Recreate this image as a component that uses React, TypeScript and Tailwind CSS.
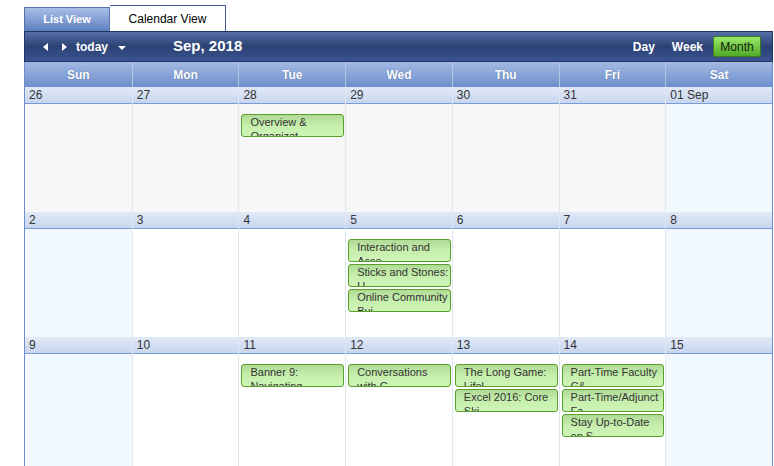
import React from "react";

type Cell = { label: string; kind: "other" | "weekend" | "day"; events?: string[] };

const weeks: Cell[][] = [
  [
    { label: "26", kind: "other" },
    { label: "27", kind: "other" },
    { label: "28", kind: "other", events: ["Overview & Organizat"] },
    { label: "29", kind: "other" },
    { label: "30", kind: "other" },
    { label: "31", kind: "other" },
    { label: "01 Sep", kind: "weekend" },
  ],
  [
    { label: "2", kind: "weekend" },
    { label: "3", kind: "day" },
    { label: "4", kind: "day" },
    {
      label: "5",
      kind: "day",
      events: ["Interaction and Acce", "Sticks and Stones: U", "Online Community Bui"],
    },
    { label: "6", kind: "day" },
    { label: "7", kind: "day" },
    { label: "8", kind: "weekend" },
  ],
  [
    { label: "9", kind: "weekend" },
    { label: "10", kind: "day" },
    { label: "11", kind: "day", events: ["Banner 9: Navigating"] },
    { label: "12", kind: "day", events: ["Conversations with C"] },
    { label: "13", kind: "day", events: ["The Long Game: Lifel", "Excel 2016: Core Ski"] },
    {
      label: "14",
      kind: "day",
      events: ["Part-Time Faculty C&", "Part-Time/Adjunct Fa", "Stay Up-to-Date on S"],
    },
    { label: "15", kind: "weekend" },
  ],
];

const days = ["Sun", "Mon", "Tue", "Wed", "Thu", "Fri", "Sat"];

function Event({ title }: { title: string }) {
  return (
    <div className="ml-[2px] mr-[1px] h-[23px] overflow-hidden rounded-[3px] border border-[#57a02a] bg-gradient-to-b from-[#b0da96] via-[#c6efad] to-[#cdf5b6] pl-[8px] pr-0 text-[11px] leading-[14px] text-[#333]">
      {title}
    </div>
  );
}

export default function App() {
  return (
    <div
      className="h-[466px] w-[774px] overflow-hidden bg-white"
      style={{ fontFamily: '"Liberation Sans", Arial, sans-serif' }}
    >
      <div className="ml-[24px] w-[749px]">
        {/* Tabs */}
        <div className="flex h-[31px] items-end pt-[5px]">
          <div className="flex h-[24px] w-[86px] items-center justify-center border border-b-0 border-[#5573ad] bg-gradient-to-b from-[#a9bee6] to-[#5e80c2] text-[11px] font-bold text-white">
            List View
          </div>
          <div className="flex h-[26px] w-[116px] items-center justify-center border border-b-0 border-l-0 border-[#3f5a94] bg-white text-[12px] text-black">
            Calendar View
          </div>
        </div>

        {/* Toolbar */}
        <div className="flex h-[31px] items-center border border-[#22345f] bg-gradient-to-b from-[#5670a8] via-[#2b4273] to-[#3a5391] pr-[11px] text-white">
          <div className="ml-[18px] flex items-center gap-[14px]">
            <svg width="5" height="8" viewBox="0 0 5 8">
              <polygon points="5,0 0,4 5,8" fill="white" />
            </svg>
            <svg width="5" height="8" viewBox="0 0 5 8">
              <polygon points="0,0 5,4 0,8" fill="white" />
            </svg>
          </div>
          <span className="ml-[9px] text-[12px] font-bold">today</span>
          <svg className="ml-[10px] mt-[2px]" width="8" height="4" viewBox="0 0 8 4">
            <polygon points="0,0 8,0 4,4" fill="white" />
          </svg>
          <span className="ml-[47px] text-[15px] font-bold">Sep, 2018</span>
          <div className="flex-1" />
          <span className="text-[12px] font-bold">Day</span>
          <span className="ml-[17px] text-[12px] font-bold">Week</span>
          <div className="ml-[10px] flex h-[21px] w-[48px] items-center justify-center rounded-[2px] border border-[#3d7f1c] bg-gradient-to-b from-[#9ae86a] to-[#4faa24] text-[12px] text-[#10200a]">
            Month
          </div>
        </div>

        {/* Day header */}
        <div className="grid h-[25px] grid-cols-7 border-x border-[#6d8fce] bg-gradient-to-b from-[#a3b9e2] to-[#6e8fcd]">
          {days.map((d, i) => (
            <div
              key={d}
              className={`flex items-center justify-center text-[12px] font-bold text-white ${
                i > 0 ? "border-l border-[#b4c6e8]" : ""
              }`}
              style={{ textShadow: "0 0 1px rgba(40,60,110,0.6)" }}
            >
              {d}
            </div>
          ))}
        </div>

        {/* Weeks */}
        {weeks.map((week, wi) => (
          <div key={wi} className="grid grid-cols-7 border-x border-[#6d8fce]">
            {week.map((c, ci) => (
              <div
                key={ci}
                className={`flex flex-col ${wi === 2 ? "h-[130px]" : "h-[125px]"} ${
                  ci > 0 ? "border-l border-[#dfe7f3]" : ""
                }`}
              >
                <div className="h-[17px] border-b border-[#7a9cd8] bg-gradient-to-b from-[#e2e9f6] to-[#c7d6ef] pl-[4px] text-[12px] leading-[16px] text-[#333]">
                  {c.label}
                </div>
                <div
                  className={`flex flex-1 flex-col gap-[2px] pt-[10px] ${
                    c.kind === "other" ? "bg-[#f7f7f7]" : c.kind === "weekend" ? "bg-[#f1f8fe]" : "bg-white"
                  }`}
                >
                  {c.events?.map((e, ei) => (
                    <Event key={ei} title={e} />
                  ))}
                </div>
              </div>
            ))}
          </div>
        ))}
      </div>
    </div>
  );
}
